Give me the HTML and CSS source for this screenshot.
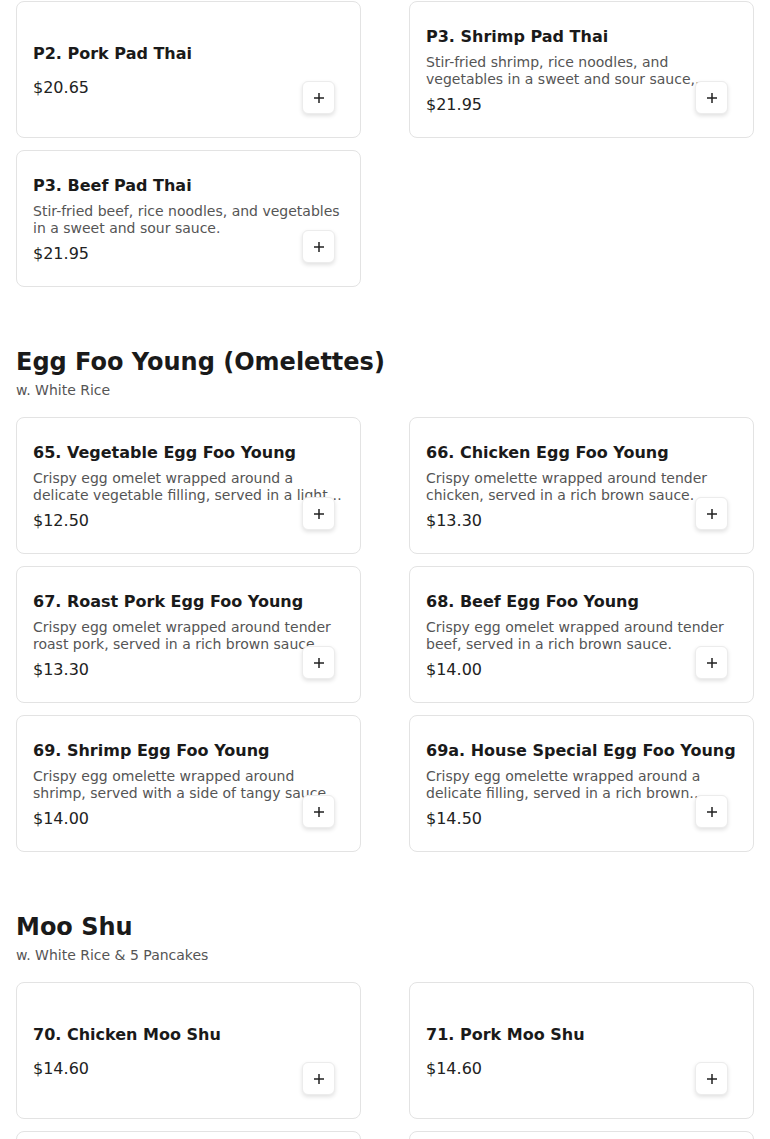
FILE: index.html
```html
<!DOCTYPE html>
<html lang="en">
<head>
<meta charset="utf-8">
<title>Menu</title>
<link rel="stylesheet" href="styles.css">
</head>
<body>
<main class="page">
  <section class="section section-first">
    <div class="grid">
      <article class="card">
        <div class="card-body">
          <h3 class="item-title">P2. Pork Pad Thai</h3>
          <p class="item-price">$20.65</p>
        </div>
        <button class="add-btn" aria-label="Add"><svg viewBox="0 0 12 12" width="12" height="12"><path d="M6 1v10M1 6h10" stroke="#222" stroke-width="1.5" fill="none"/></svg></button>
      </article>
      <article class="card">
        <div class="card-body">
          <h3 class="item-title">P3. Shrimp Pad Thai</h3>
          <p class="item-desc">Stir-fried shrimp, rice noodles, and vegetables in a sweet and sour sauce, topped with crushed peanuts.</p>
          <p class="item-price">$21.95</p>
        </div>
        <button class="add-btn" aria-label="Add"><svg viewBox="0 0 12 12" width="12" height="12"><path d="M6 1v10M1 6h10" stroke="#222" stroke-width="1.5" fill="none"/></svg></button>
      </article>
      <article class="card">
        <div class="card-body">
          <h3 class="item-title">P3. Beef Pad Thai</h3>
          <p class="item-desc">Stir-fried beef, rice noodles, and vegetables in a sweet and sour sauce.</p>
          <p class="item-price">$21.95</p>
        </div>
        <button class="add-btn" aria-label="Add"><svg viewBox="0 0 12 12" width="12" height="12"><path d="M6 1v10M1 6h10" stroke="#222" stroke-width="1.5" fill="none"/></svg></button>
      </article>
    </div>
  </section>

  <section class="section">
    <h2 class="section-title">Egg Foo Young (Omelettes)</h2>
    <p class="section-sub">w. White Rice</p>
    <div class="grid">
      <article class="card">
        <div class="card-body">
          <h3 class="item-title">65. Vegetable Egg Foo Young</h3>
          <p class="item-desc">Crispy egg omelet wrapped around a delicate vegetable filling, served in a light brown sauce.</p>
          <p class="item-price">$12.50</p>
        </div>
        <button class="add-btn" aria-label="Add"><svg viewBox="0 0 12 12" width="12" height="12"><path d="M6 1v10M1 6h10" stroke="#222" stroke-width="1.5" fill="none"/></svg></button>
      </article>
      <article class="card">
        <div class="card-body">
          <h3 class="item-title">66. Chicken Egg Foo Young</h3>
          <p class="item-desc">Crispy omelette wrapped around tender chicken, served in a rich brown sauce.</p>
          <p class="item-price">$13.30</p>
        </div>
        <button class="add-btn" aria-label="Add"><svg viewBox="0 0 12 12" width="12" height="12"><path d="M6 1v10M1 6h10" stroke="#222" stroke-width="1.5" fill="none"/></svg></button>
      </article>
      <article class="card">
        <div class="card-body">
          <h3 class="item-title">67. Roast Pork Egg Foo Young</h3>
          <p class="item-desc">Crispy egg omelet wrapped around tender roast pork, served in a rich brown sauce.</p>
          <p class="item-price">$13.30</p>
        </div>
        <button class="add-btn" aria-label="Add"><svg viewBox="0 0 12 12" width="12" height="12"><path d="M6 1v10M1 6h10" stroke="#222" stroke-width="1.5" fill="none"/></svg></button>
      </article>
      <article class="card">
        <div class="card-body">
          <h3 class="item-title">68. Beef Egg Foo Young</h3>
          <p class="item-desc">Crispy egg omelet wrapped around tender beef, served in a rich brown sauce.</p>
          <p class="item-price">$14.00</p>
        </div>
        <button class="add-btn" aria-label="Add"><svg viewBox="0 0 12 12" width="12" height="12"><path d="M6 1v10M1 6h10" stroke="#222" stroke-width="1.5" fill="none"/></svg></button>
      </article>
      <article class="card">
        <div class="card-body">
          <h3 class="item-title">69. Shrimp Egg Foo Young</h3>
          <p class="item-desc">Crispy egg omelette wrapped around shrimp, served with a side of tangy sauce.</p>
          <p class="item-price">$14.00</p>
        </div>
        <button class="add-btn" aria-label="Add"><svg viewBox="0 0 12 12" width="12" height="12"><path d="M6 1v10M1 6h10" stroke="#222" stroke-width="1.5" fill="none"/></svg></button>
      </article>
      <article class="card">
        <div class="card-body">
          <h3 class="item-title">69a. House Special Egg Foo Young</h3>
          <p class="item-desc">Crispy egg omelette wrapped around a delicate filling, served in a rich brown sauce.</p>
          <p class="item-price">$14.50</p>
        </div>
        <button class="add-btn" aria-label="Add"><svg viewBox="0 0 12 12" width="12" height="12"><path d="M6 1v10M1 6h10" stroke="#222" stroke-width="1.5" fill="none"/></svg></button>
      </article>
    </div>
  </section>

  <section class="section">
    <h2 class="section-title">Moo Shu</h2>
    <p class="section-sub">w. White Rice &amp; 5 Pancakes</p>
    <div class="grid">
      <article class="card">
        <div class="card-body">
          <h3 class="item-title">70. Chicken Moo Shu</h3>
          <p class="item-price">$14.60</p>
        </div>
        <button class="add-btn" aria-label="Add"><svg viewBox="0 0 12 12" width="12" height="12"><path d="M6 1v10M1 6h10" stroke="#222" stroke-width="1.5" fill="none"/></svg></button>
      </article>
      <article class="card">
        <div class="card-body">
          <h3 class="item-title">71. Pork Moo Shu</h3>
          <p class="item-price">$14.60</p>
        </div>
        <button class="add-btn" aria-label="Add"><svg viewBox="0 0 12 12" width="12" height="12"><path d="M6 1v10M1 6h10" stroke="#222" stroke-width="1.5" fill="none"/></svg></button>
      </article>
      <article class="card">
        <div class="card-body">
          <h3 class="item-title">72. Beef Moo Shu</h3>
          <p class="item-price">$14.60</p>
        </div>
        <button class="add-btn" aria-label="Add"><svg viewBox="0 0 12 12" width="12" height="12"><path d="M6 1v10M1 6h10" stroke="#222" stroke-width="1.5" fill="none"/></svg></button>
      </article>
      <article class="card">
        <div class="card-body">
          <h3 class="item-title">73. Shrimp Moo Shu</h3>
          <p class="item-price">$15.40</p>
        </div>
        <button class="add-btn" aria-label="Add"><svg viewBox="0 0 12 12" width="12" height="12"><path d="M6 1v10M1 6h10" stroke="#222" stroke-width="1.5" fill="none"/></svg></button>
      </article>
    </div>
  </section>
</main>
</body>
</html>
```

FILE: styles.css
```css
* { box-sizing: border-box; }

html, body {
  margin: 0;
  padding: 0;
  background: #ffffff;
}

body {
  font-family: "DejaVu Sans", "Noto Sans", sans-serif;
  color: #1a1a1a;
}

.page {
  padding: 1px 16px 40px;
}

.section {
  margin-top: 60px;
}

.section-first {
  margin-top: 0;
}

.section-title {
  margin: 0;
  font-size: 24px;
  line-height: 30px;
  font-weight: 700;
  color: #1a1a1a;
}

.section-sub {
  margin: 5px 0 18px;
  font-size: 14px;
  line-height: 17px;
  color: #555555;
}

.grid {
  display: grid;
  grid-template-columns: 1fr 1fr;
  column-gap: 48px;
  row-gap: 12px;
}

.card {
  position: relative;
  height: 137px;
  border: 1px solid #e3e3e3;
  border-radius: 8px;
  background: #ffffff;
  padding: 24px 16px 22px;
  display: flex;
  flex-direction: column;
  justify-content: center;
}

.card-body {
  display: flex;
  flex-direction: column;
}

.item-title {
  margin: 0 0 7px;
  font-size: 16px;
  line-height: 20px;
  font-weight: 700;
  color: #1a1a1a;
  white-space: nowrap;
}

.item-desc {
  margin: 0;
  font-size: 14px;
  line-height: 17px;
  color: #555555;
  display: -webkit-box;
  -webkit-line-clamp: 2;
  -webkit-box-orient: vertical;
  overflow: hidden;
}

.item-price {
  margin: 7px 0 0;
  font-size: 16px;
  line-height: 20px;
  color: #222222;
}

.add-btn {
  position: absolute;
  right: 25px;
  bottom: 23px;
  width: 33px;
  height: 33px;
  padding: 0;
  border: 1px solid #ececec;
  border-radius: 6px;
  background: #ffffff;
  box-shadow: 0 2px 4px rgba(0, 0, 0, 0.12);
  display: flex;
  align-items: center;
  justify-content: center;
  cursor: pointer;
}

.add-btn svg {
  display: block;
}
```
